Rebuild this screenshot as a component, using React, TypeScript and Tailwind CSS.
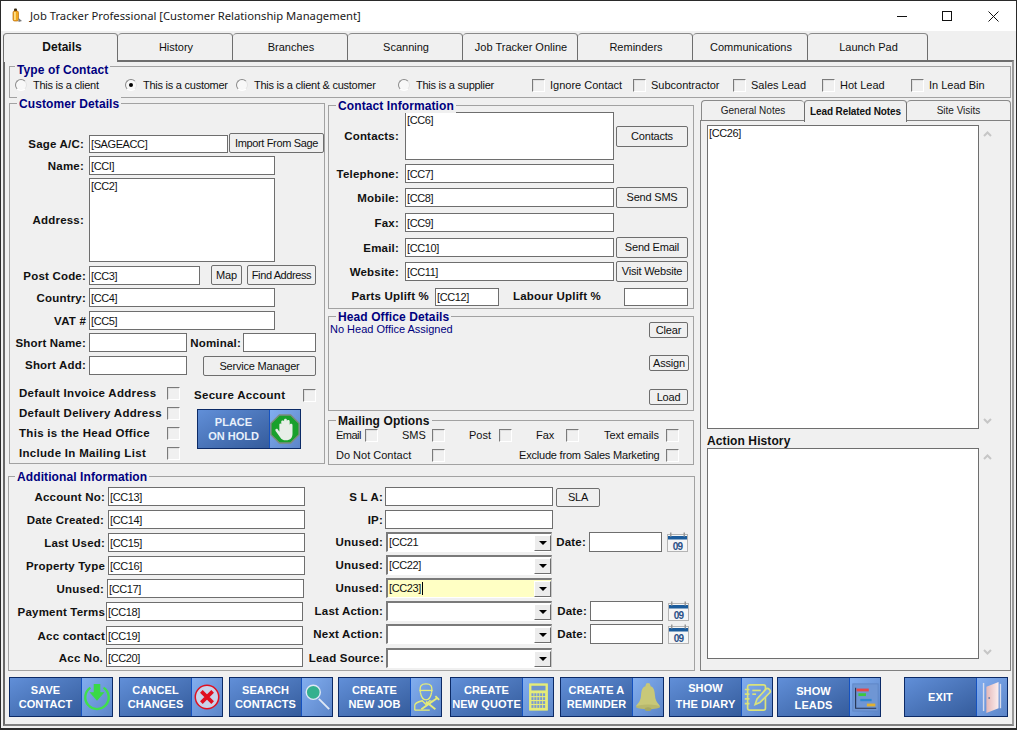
import type { ReactNode } from "react";

const sunken = "border border-[#6e6e6e] bg-white";
const inputText = "text-[11px] leading-[13px] tracking-[-0.4px] text-[#111] outline-none px-[1px]";

function Field({ w, h = "h-[19px]", value = "", bg = "bg-white" }: { w: string; h?: string; value?: string; bg?: string }) {
  return <input readOnly value={value} className={`${w} ${h} ${bg} shrink-0 border border-[#6e6e6e] ${inputText}`} />;
}

function Area({ w, h, value = "" }: { w: string; h: string; value?: string }) {
  return <textarea readOnly value={value} className={`${w} ${h} shrink-0 resize-none ${sunken} ${inputText} pt-[1px]`} />;
}

function Label({ w, pr = "pr-[4px]", children }: { w: string; pr?: string; children: ReactNode }) {
  return <span className={`${w} ${pr} flex shrink-0 justify-end text-[11.5px] leading-[14px] font-bold tracking-[0.2px] whitespace-nowrap text-[#111]`}>{children}</span>;
}

function Btn({ w, h = "h-[21px]", className = "", children }: { w: string; h?: string; className?: string; children: ReactNode }) {
  return (
    <button className={`${w} ${h} ${className} flex shrink-0 items-center justify-center rounded-[2px] border border-[#6e6e6e] bg-[#f0f0f0] text-[11px] leading-none tracking-[-0.2px] whitespace-nowrap text-[#111]`}>
      {children}
    </button>
  );
}

function Check({ className = "" }: { className?: string }) {
  return <span className={`block h-[13px] w-[13px] shrink-0 border border-t-[#7a7a7a] border-r-white border-b-white border-l-[#7a7a7a] bg-[#f0f0f0] shadow-[inset_1px_1px_0_#e0e0e0] ${className}`} />;
}

function Radio({ on = false }: { on?: boolean }) {
  return (
    <span className="flex h-[12px] w-[12px] shrink-0 items-center justify-center rounded-full border border-t-[#8a8a8a] border-r-[#e4e4e4] border-b-white border-l-[#8a8a8a] bg-[#f8f8f8]">
      {on && <span className="h-[4px] w-[4px] rounded-full bg-black" />}
    </span>
  );
}

function Group({ title, titleLeft, titleTop = "-top-[7px]", black = false, className, children }: { title: string; titleLeft: string; titleTop?: string; black?: boolean; className: string; children: ReactNode }) {
  return (
    <div className={`relative shrink-0 border border-[#a2a2a2] ${className}`}>
      <span className={`absolute ${titleLeft} ${titleTop} bg-[#f0f0f0] px-[2px] text-[12px] leading-[14px] font-bold tracking-[0.1px] whitespace-nowrap ${black ? "text-[#111]" : "text-[#00007f]"}`}>
        {title}
      </span>
      {children}
    </div>
  );
}

function Combo({ value = "", yellow = false, caret = false }: { value?: string; yellow?: boolean; caret?: boolean }) {
  return (
    <div className={`relative flex h-[20px] w-[166px] shrink-0 items-center border-t-2 border-r border-b border-l-2 border-t-[#7a7a7a] border-r-[#c8c8c8] border-b-white border-l-[#7a7a7a] ${yellow ? "bg-[#ffffc4]" : "bg-white"}`}>
      <span className={`flex-1 pl-[1px] ${inputText}`}>
        {value}
        {caret && <span className="ml-[1px] inline-block h-[13px] w-[1px] bg-black align-top" />}
      </span>
      <span className="flex h-[16px] w-[17px] shrink-0 items-center justify-center border border-t-white border-r-[#6e6e6e] border-b-[#6e6e6e] border-l-white bg-[#ececec]">
        <span className="h-0 w-0 border-x-[4px] border-t-[4px] border-x-transparent border-t-black" />
      </span>
    </div>
  );
}

function CalendarIcon() {
  return (
    <svg viewBox="0 0 21 20" className="h-[20px] w-[21px] shrink-0">
      <rect x="0.5" y="2.5" width="20" height="17" fill="#f6f6f6" stroke="#b4b4b4" />
      <rect x="1" y="4" width="19" height="3.5" fill="#1c5c9c" />
      <rect x="3" y="0.5" width="1.5" height="4" fill="#999" />
      <rect x="16.5" y="0.5" width="1.5" height="4" fill="#999" />
      <text x="10.5" y="18" textAnchor="middle" fontSize="10" fontWeight="700" letterSpacing="-0.8" fill="#2a4f86" fontFamily="Liberation Sans, sans-serif">09</text>
    </svg>
  );
}

function ChevUp() {
  return (
    <svg viewBox="0 0 9 6" className="h-[6px] w-[9px]">
      <path d="M1 5 L4.5 1.5 L8 5" fill="none" stroke="#c6c6c6" strokeWidth="2" />
    </svg>
  );
}

function ChevDown() {
  return (
    <svg viewBox="0 0 9 6" className="h-[6px] w-[9px]">
      <path d="M1 1 L4.5 4.5 L8 1" fill="none" stroke="#c6c6c6" strokeWidth="2" />
    </svg>
  );
}

/* button icons, all on a 32x38 box */
function SaveIcon() {
  return (
    <svg viewBox="0 0 32 38" className="h-full w-full">
      <path d="M9 9 A12.5 12.5 0 1 0 23 9" fill="none" stroke="#3fe04c" strokeWidth="2.5" />
      <path d="M12.5 5 H19.5 V14 H24 L16 23 L8 14 H12.5 Z" fill="#39d946" />
    </svg>
  );
}

function CancelIcon() {
  return (
    <svg viewBox="0 0 32 38" className="h-full w-full">
      <circle cx="16" cy="19" r="12.5" fill="#c9d4ea" stroke="#e01020" strokeWidth="1.6" />
      <path d="M10 13 L22 25 M22 13 L10 25" stroke="#e01020" strokeWidth="4" />
    </svg>
  );
}

function SearchIcon() {
  return (
    <svg viewBox="0 0 32 38" className="h-full w-full">
      <path d="M18 21 L29 32" stroke="#dfe8f5" strokeWidth="2" />
      <circle cx="12" cy="14" r="7.5" fill="#34b08e" stroke="#dfe8f5" strokeWidth="1.5" />
    </svg>
  );
}

function JobIcon() {
  return (
    <svg viewBox="0 0 32 38" fill="none" stroke="#e6ec78" strokeWidth="1.4" className="h-full w-full">
      <path d="M10 14 C9 7 11 5 16 5 C21 5 23 7 22 14" />
      <path d="M9 12 H23" />
      <path d="M10 14 C11 20 13 22 16 22 C19 22 21 20 22 14" />
      <path d="M4 33 V28 C4 25 8 24 12 23 L16 27 L20 23 L23 24" />
      <path d="M4 33 H20" />
      <path d="M11 32 L28 20 M26 18 L30 22" strokeWidth="2" />
      <path d="M16 24 L26 32" strokeWidth="2" />
    </svg>
  );
}

function CalcIcon() {
  const keys = [0, 1, 2, 3].flatMap((r) => [0, 1, 2, 3, 4].map((c) => ({ r, c })));
  return (
    <svg viewBox="0 0 32 38" className="h-full w-full">
      <rect x="7" y="5" width="19" height="28" fill="#e6ec78" stroke="#e6ec78" />
      <rect x="9" y="7" width="15" height="5" fill="#7094cc" />
      {keys.map(({ r, c }) => (
        <rect key={`${r}-${c}`} x={9 + c * 3.1} y={15 + r * 4.2} width="2.2" height="3" fill="#7a9ad0" />
      ))}
    </svg>
  );
}

function BellIcon() {
  return (
    <svg viewBox="0 0 32 38" className="h-full w-full">
      <circle cx="16" cy="6.5" r="2.5" fill="#c8c878" />
      <path d="M16 7 C9 7 9 13 8.5 18 C8 24 5 26 3 29 H29 C27 26 24 24 23.5 18 C23 13 23 7 16 7 Z" fill="#c8c878" />
      <ellipse cx="16" cy="29.5" rx="13" ry="2.5" fill="#b8b86c" />
      <ellipse cx="16" cy="32" rx="3.5" ry="2" fill="#a5a862" />
    </svg>
  );
}

function DiaryIcon() {
  return (
    <svg viewBox="0 0 32 38" fill="none" stroke="#dbe27a" strokeWidth="1.8" className="h-full w-full">
      <rect x="6" y="6" width="19" height="27" rx="2" />
      <path d="M3 11 H8 M3 16 H8 M3 21 H8 M3 26 H8" />
      <path d="M11 12 H20" />
      <path d="M11 16 H15" />
      <path d="M14 27 L16 21 L26 10 C28 9 31 12 30 14 L19 25 Z" fill="#7ea7e6" />
    </svg>
  );
}

function LeadsIcon() {
  return (
    <svg viewBox="0 0 32 38" className="h-full w-full">
      <rect x="3" y="5" width="27" height="29" fill="#6f96d4" stroke="#5f86c6" />
      <path d="M6 9 V31 H28" fill="none" stroke="#26324f" strokeWidth="1.2" />
      <rect x="7" y="10" width="13" height="3" fill="#e84848" />
      <rect x="9" y="15" width="8" height="3" fill="#3cc83c" />
      <rect x="11" y="21" width="12" height="2.5" fill="#2f86d0" />
      <rect x="18" y="26" width="9" height="3" fill="#e0b030" />
    </svg>
  );
}

function DoorIcon() {
  return (
    <svg viewBox="0 0 32 38" className="h-full w-full">
      <defs>
        <linearGradient id="door" x1="0" x2="1" y1="0" y2="0">
          <stop offset="0" stopColor="#e4b8b8" />
          <stop offset="1" stopColor="#fbeeee" />
        </linearGradient>
      </defs>
      <path d="M7 4 V34" stroke="#d8dcec" strokeWidth="1.5" />
      <path d="M25 5 V31" stroke="#d8dcec" strokeWidth="1.5" />
      <path d="M10 8 L23 3 V31 L10 36 Z" fill="url(#door)" />
      <circle cx="13" cy="20" r="1" fill="#6f7fa8" />
    </svg>
  );
}

function HoldIcon() {
  return (
    <svg viewBox="0 0 32 38" className="h-full w-full">
      <path d="M10 4 H22 L31 13 V25 L22 34 H10 L1 25 V13 Z" fill="#19a02c" stroke="#7c8c80" strokeWidth="1.5" />
      <path d="M10 14 V22 L8 19 C7 18 5 19 6 21 L11 28 C12 30 14 31 17 31 C22 31 24 28 24 24 V15 C24 13 21 13 21 15 V11 C21 9 18 9 18 11 V9.5 C18 7.5 15 7.5 15 9.5 V11 C15 9.5 12 9.5 12 11 V14 C12 13 10 13 10 14 Z" fill="#e8efe8" />
    </svg>
  );
}

function ActionButton({ lines, icon, ml, text = "leading-[14px]" }: { lines: string[]; icon: ReactNode; ml: string; text?: string }) {
  return (
    <button className={`${ml} flex h-[40px] w-[104px] shrink-0 border border-[#0c2a66]`}>
      <span className={`flex h-full w-[71px] shrink-0 flex-col items-center justify-center bg-linear-to-br from-[#618fd8] to-[#355c9c] text-[11px] font-bold tracking-[0.1px] text-white ${text}`}>
        {lines.map((l) => (
          <span key={l} className="whitespace-nowrap">{l}</span>
        ))}
      </span>
      <span className="h-full w-[31px] shrink-0 border-l border-[#1552c0] bg-linear-to-br from-[#82aef0] to-[#5c85c8]">{icon}</span>
    </button>
  );
}

function TypeRadio({ w, label, on }: { w: string; label: string; on?: boolean }) {
  return (
    <span className={`${w} flex shrink-0 items-center gap-[6px] text-[11px] leading-none tracking-[-0.25px] whitespace-nowrap text-[#111]`}>
      <Radio on={on} />
      {label}
    </span>
  );
}

function TypeCheck({ w, label }: { w: string; label: string }) {
  return (
    <span className={`${w} flex shrink-0 items-center gap-[5px] text-[11px] leading-none whitespace-nowrap text-[#111]`}>
      <Check />
      {label}
    </span>
  );
}

function MailOption({ w, ml = "", label }: { w: string; ml?: string; label: string }) {
  return (
    <span className={`${ml} flex shrink-0 items-center text-[11px] leading-none whitespace-nowrap text-[#111]`}>
      <span className={w}>{label}</span>
      <Check />
    </span>
  );
}

function CheckLine({ label }: { label: string }) {
  return (
    <div className="flex h-[20px] items-center">
      <span className="w-[148px] text-[11.5px] leading-[14px] font-bold tracking-[0.3px] whitespace-nowrap text-[#111]">{label}</span>
      <Check />
    </div>
  );
}

const tabs = [
  { label: "History", w: "w-[115px]" },
  { label: "Branches", w: "w-[115px]" },
  { label: "Scanning", w: "w-[115px]" },
  { label: "Job Tracker Online", w: "w-[115px]" },
  { label: "Reminders", w: "w-[115px]" },
  { label: "Communications", w: "w-[115px]" },
  { label: "Launch Pad", w: "w-[120px]" },
];

const leftRows = [
  { label: "Account No:", value: "[CC13]", lw: "w-[99px]", pr: "pr-[3px]", mt: "mt-[10px]" },
  { label: "Date Created:", value: "[CC14]", lw: "w-[99px]", pr: "pr-[4px]", mt: "mt-[4px]" },
  { label: "Last Used:", value: "[CC15]", lw: "w-[99px]", pr: "pr-[3px]", mt: "mt-[4px]" },
  { label: "Property Type", value: "[CC16]", lw: "w-[99px]", pr: "pr-[3px]", mt: "mt-[4px]" },
  { label: "Unused:", value: "[CC17]", lw: "w-[98px]", pr: "pr-[3px]", mt: "mt-[4px]" },
  { label: "Payment Terms", value: "[CC18]", lw: "w-[97px]", pr: "pr-[1px]", mt: "mt-[4px]" },
  { label: "Acc contact", value: "[CC19]", lw: "w-[97px]", pr: "pr-[1px]", mt: "mt-[5px]" },
  { label: "Acc No.", value: "[CC20]", lw: "w-[97px]", pr: "pr-[3px]", mt: "mt-[3px]" },
];

export default function App() {
  return (
    <div className="flex h-[730px] w-[1017px] flex-col overflow-hidden border border-b-2 border-[#2a2a2a] bg-[#f0f0f0] font-['Liberation_Sans',sans-serif]">
      {/* Title bar */}
      <div className="flex h-[30px] shrink-0 items-center bg-white">
        <svg viewBox="0 0 12 16" className="ml-[10px] h-[16px] w-[12px]">
          <rect x="3" y="0.5" width="3" height="3" rx="1" fill="#3a2a10" />
          <rect x="2" y="3" width="5.5" height="10" rx="1.5" fill="#f2a81c" stroke="#b86c10" strokeWidth="0.7" />
          <rect x="3.2" y="4" width="1.5" height="8" fill="#ffe9a0" />
          <path d="M7.5 10 L11 13 L7.5 14 Z" fill="#7a7a7a" />
        </svg>
        <span className="ml-[7px] font-['Noto_Sans',sans-serif] text-[11.25px] text-[#1a1a1a]">Job Tracker Professional [Customer Relationship Management]</span>
        <div className="ml-auto flex items-center pr-[17px]">
          <svg viewBox="0 0 10 10" className="h-[10px] w-[10px]"><path d="M0 5.5 H10" stroke="#111" /></svg>
          <svg viewBox="0 0 10 10" className="ml-[35px] h-[10px] w-[10px]"><rect x="0.5" y="0.5" width="9" height="9" fill="none" stroke="#111" /></svg>
          <svg viewBox="0 0 11 11" className="ml-[36px] h-[11px] w-[11px]"><path d="M0.5 0.5 L10.5 10.5 M10.5 0.5 L0.5 10.5" stroke="#111" /></svg>
        </div>
      </div>

      {/* Tab strip */}
      <div className="mt-[2px] flex h-[27px] shrink-0 pl-[2px]">
        <div className="relative z-10 flex h-[29px] w-[115px] shrink-0 items-center justify-center rounded-t-[4px] border-x border-t border-x-[#6e6e6e] border-t-[#8a8a8a] bg-[#f0f0f0] pb-[3px] pl-[3px] text-[12px] font-bold text-[#111]">
          Details
        </div>
        {tabs.map((t) => (
          <div key={t.label} className={`${t.w} flex h-[27px] shrink-0 items-center justify-center rounded-t-[4px] border-t border-r border-t-[#8a8a8a] border-r-[#6e6e6e] bg-[#f0f0f0] pl-[2px] text-[11px] text-[#111]`}>
            {t.label}
          </div>
        ))}
      </div>

      {/* Page frame */}
      <div className="ml-[2px] flex h-[666px] w-[1011px] shrink-0 flex-col border-2 border-t-[#6e6e6e] border-r-[#9a9a9a] border-b-[#808080] border-l-[#696969] pl-[3px]">
        <Group title="Type of Contact" titleLeft="left-[5px]" titleTop="-top-[4px]" className="mt-[4px] ml-[1px] h-[32px] w-[1002px]">
          <div className="mt-[11px] flex h-[14px] items-center pl-[5px]">
            <TypeRadio w="w-[110px]" label="This is a client" />
            <TypeRadio w="w-[111px]" label="This is a customer" on />
            <TypeRadio w="w-[162px]" label="This is a client & customer" />
            <TypeRadio w="w-[134px]" label="This is a supplier" />
            <TypeCheck w="w-[101px]" label="Ignore Contact" />
            <TypeCheck w="w-[100px]" label="Subcontractor" />
            <TypeCheck w="w-[89px]" label="Sales Lead" />
            <TypeCheck w="w-[89px]" label="Hot Lead" />
            <TypeCheck w="w-[90px]" label="In Lead Bin" />
          </div>
        </Group>

        <div className="mt-[2px] flex h-[571px] shrink-0">
          {/* Left side */}
          <div className="w-[687px] shrink-0 pt-[3px]">
            <div className="flex h-[373px]">
              <Group title="Customer Details" titleLeft="left-[7px]" className="ml-[1px] h-[361px] w-[316px]">
                <div className="mt-[29px] flex h-[20px] items-end">
                  <Label w="w-[79px]" pr="pr-[5px]"><span className="relative -top-[2px]">Sage A/C:</span></Label>
                  <Field w="w-[139px]" h="h-[18px]" value="[SAGEACC]" />
                  <Btn w="w-[95px]" h="h-[20px]" className="ml-[1px] tracking-[-0.35px]">Import From Sage</Btn>
                </div>
                <div className="mt-[3px] flex h-[19px] items-center">
                  <Label w="w-[79px]" pr="pr-[5px]">Name:</Label>
                  <Field w="w-[186px]" value="[CCI]" />
                </div>
                <div className="mt-[3px] flex h-[84px] items-center">
                  <Label w="w-[79px]" pr="pr-[5px]">Address:</Label>
                  <Area w="w-[186px]" h="h-[84px]" value="[CC2]" />
                </div>
                <div className="mt-[3px] flex h-[20px] items-end">
                  <Label w="w-[79px]" pr="pr-[3px]"><span className="relative -top-[2px]">Post Code:</span></Label>
                  <Field w="w-[111px]" value="[CC3]" />
                  <Btn w="w-[31px]" h="h-[20px]" className="ml-[11px]">Map</Btn>
                  <Btn w="w-[69px]" h="h-[20px]" className="ml-[5px] tracking-[-0.4px]">Find Address</Btn>
                </div>
                <div className="mt-[3px] flex h-[19px] items-center">
                  <Label w="w-[79px]" pr="pr-[3px]">Country:</Label>
                  <Field w="w-[186px]" value="[CC4]" />
                </div>
                <div className="mt-[4px] flex h-[19px] items-center">
                  <Label w="w-[79px]" pr="pr-[3px]">VAT #</Label>
                  <Field w="w-[186px]" value="[CC5]" />
                </div>
                <div className="mt-[3px] flex h-[19px] items-center">
                  <Label w="w-[79px]" pr="pr-[3px]">Short Name:</Label>
                  <Field w="w-[98px]" />
                  <Label w="w-[56px]" pr="pr-[2px]">Nominal:</Label>
                  <Field w="w-[73px]" />
                </div>
                <div className="mt-[4px] flex h-[20px] items-start">
                  <Label w="w-[79px]" pr="pr-[3px]"><span className="relative top-[2px]">Short Add:</span></Label>
                  <Field w="w-[98px]" />
                  <Btn w="w-[113px]" h="h-[20px]" className="ml-[16px]">Service Manager</Btn>
                </div>
                <div className="mt-[7px] flex">
                  <div className="ml-[9px] w-[175px] shrink-0">
                    <CheckLine label="Default Invoice Address" />
                    <CheckLine label="Default Delivery Address" />
                    <CheckLine label="This is the Head Office" />
                    <CheckLine label="Include In Mailing List" />
                  </div>
                  <div className="mt-[2px] w-[122px] shrink-0">
                    <div className="flex h-[20px] items-center justify-between">
                      <span className="text-[11.5px] leading-[14px] font-bold tracking-[0.3px] whitespace-nowrap text-[#111]">Secure Account</span>
                      <Check />
                    </div>
                    <button className="mt-[4px] ml-[3px] flex h-[40px] w-[104px] border border-[#0c2a66]">
                      <span className="flex h-full w-[71px] shrink-0 flex-col items-center justify-center bg-linear-to-br from-[#618fd8] to-[#355c9c] text-[11px] leading-[14px] font-bold text-[#e8f0fb]">
                        <span>PLACE</span>
                        <span>ON HOLD</span>
                      </span>
                      <span className="h-full w-[31px] shrink-0 border-l border-[#1552c0] bg-linear-to-br from-[#82aef0] to-[#5c85c8]"><HoldIcon /></span>
                    </button>
                  </div>
                </div>
              </Group>

              <div className="ml-[3px] w-[366px] shrink-0">
                <Group title="Contact Information" titleLeft="left-[7px]" className="mt-[2px] h-[204px] w-[366px]">
                  <div className="mt-[6px] flex h-[48px] items-center">
                    <Label w="w-[76px]" pr="pr-[6px]">Contacts:</Label>
                    <Area w="w-[209px]" h="h-[48px]" value="[CC6]" />
                    <Btn w="w-[72px]" className="ml-[2px]">Contacts</Btn>
                  </div>
                  <div className="mt-[4px] flex h-[19px] items-center">
                    <Label w="w-[76px]" pr="pr-[6px]">Telephone:</Label>
                    <Field w="w-[209px]" value="[CC7]" />
                  </div>
                  <div className="mt-[4px] flex h-[21px] items-center">
                    <Label w="w-[76px]" pr="pr-[6px]">Mobile:</Label>
                    <Field w="w-[209px]" value="[CC8]" />
                    <Btn w="w-[72px]" className="ml-[2px]">Send SMS</Btn>
                  </div>
                  <div className="mt-[5px] flex h-[19px] items-center">
                    <Label w="w-[76px]" pr="pr-[6px]">Fax:</Label>
                    <Field w="w-[209px]" value="[CC9]" />
                  </div>
                  <div className="mt-[5px] flex h-[21px] items-center">
                    <Label w="w-[76px]" pr="pr-[6px]">Email:</Label>
                    <Field w="w-[209px]" value="[CC10]" />
                    <Btn w="w-[72px]" className="ml-[2px]">Send Email</Btn>
                  </div>
                  <div className="mt-[3px] flex h-[21px] items-center">
                    <Label w="w-[76px]" pr="pr-[6px]">Website:</Label>
                    <Field w="w-[209px]" value="[CC11]" />
                    <Btn w="w-[72px]" className="ml-[2px]">Visit Website</Btn>
                  </div>
                  <div className="mt-[5px] flex h-[18px] items-center">
                    <Label w="w-[100px]" pr="pr-0">Parts Uplift %</Label>
                    <span className="ml-[6px]"><Field w="w-[64px]" h="h-[18px]" value="[CC12]" /></span>
                    <Label w="w-[102px]" pr="pr-0">Labour Uplift %</Label>
                    <span className="ml-[23px]"><Field w="w-[64px]" h="h-[18px]" /></span>
                  </div>
                </Group>

                <Group title="Head Office Details" titleLeft="left-[7px]" className="mt-[7px] h-[95px] w-[366px]">
                  <div className="flex justify-between pr-[4px]">
                    <span className="mt-[6px] pl-[1px] text-[11px] leading-[13px] text-[#00007f]">No Head Office Assigned</span>
                    <div className="mt-[5px] flex w-[40px] flex-col">
                      <Btn w="w-[39px]" h="h-[16px]">Clear</Btn>
                      <Btn w="w-[40px]" h="h-[16px]" className="mt-[17px]">Assign</Btn>
                      <Btn w="w-[39px]" h="h-[16px]" className="mt-[18px]">Load</Btn>
                    </div>
                  </div>
                </Group>

                <Group title="Mailing Options" titleLeft="left-[7px]" black className="mt-[9px] h-[45px] w-[366px]">
                  <div className="mt-[7px] flex h-[14px] items-center pl-[7px]">
                    <MailOption w="w-[29px] tracking-[-0.5px]" label="Email" />
                    <MailOption w="w-[30px]" ml="ml-[24px]" label="SMS" />
                    <MailOption w="w-[30px]" ml="ml-[24px]" label="Post" />
                    <MailOption w="w-[30px]" ml="ml-[24px]" label="Fax" />
                    <MailOption w="w-[62px]" ml="ml-[25px]" label="Text emails" />
                  </div>
                  <div className="mt-[6px] flex h-[14px] items-center pl-[7px]">
                    <MailOption w="w-[96px]" label="Do Not Contact" />
                    <MailOption w="w-[147px] tracking-[-0.2px]" ml="ml-[74px]" label="Exclude from Sales Marketing" />
                  </div>
                </Group>
              </div>
            </div>

            <Group title="Additional Information" titleLeft="left-[6px]" className="h-[195px] w-[687px]">
              <div className="flex">
                <div className="w-[296px] shrink-0">
                  {leftRows.map((r) => (
                    <div key={r.value} className={`${r.mt} flex h-[19px] items-center`}>
                      <Label w={r.lw} pr={r.pr}>{r.label}</Label>
                      <Field w="w-[197px]" value={r.value} />
                    </div>
                  ))}
                </div>
                <div className="ml-[25px] flex-1 pt-[10px]">
                  <div className="flex h-[19px] items-center">
                    <Label w="w-[55px]" pr="pr-[2px]">S L A:</Label>
                    <Field w="w-[168px]" />
                    <Btn w="w-[44px]" h="h-[19px]" className="relative top-[1px] ml-[3px]">SLA</Btn>
                  </div>
                  <div className="mt-[4px] flex h-[19px] items-center">
                    <Label w="w-[55px]" pr="pr-[2px]">IP:</Label>
                    <Field w="w-[168px]" />
                  </div>
                  <div className="mt-[3px] flex h-[20px] items-center">
                    <Label w="w-[56px]" pr="pr-[3px]">Unused:</Label>
                    <Combo value="[CC21" />
                    <Label w="w-[37px]" pr="pr-[3px]">Date:</Label>
                    <Field w="w-[73px]" h="h-[20px]" />
                    <span className="ml-[5px]"><CalendarIcon /></span>
                  </div>
                  <div className="mt-[3px] flex h-[20px] items-center">
                    <Label w="w-[56px]" pr="pr-[3px]">Unused:</Label>
                    <Combo value="[CC22]" />
                  </div>
                  <div className="mt-[3px] flex h-[20px] items-center">
                    <Label w="w-[56px]" pr="pr-[3px]">Unused:</Label>
                    <Combo value="[CC23]" yellow caret />
                  </div>
                  <div className="mt-[3px] flex h-[20px] items-center">
                    <Label w="w-[56px]" pr="pr-[3px]">Last Action:</Label>
                    <Combo />
                    <Label w="w-[38px]" pr="pr-[3px]">Date:</Label>
                    <Field w="w-[73px]" h="h-[20px]" />
                    <span className="ml-[5px]"><CalendarIcon /></span>
                  </div>
                  <div className="mt-[3px] flex h-[20px] items-center">
                    <Label w="w-[56px]" pr="pr-[3px]">Next Action:</Label>
                    <Combo />
                    <Label w="w-[38px]" pr="pr-[3px]">Date:</Label>
                    <Field w="w-[73px]" h="h-[20px]" />
                    <span className="ml-[5px]"><CalendarIcon /></span>
                  </div>
                  <div className="mt-[4px] flex h-[20px] items-center">
                    <Label w="w-[56px]" pr="pr-[2px]">Lead Source:</Label>
                    <Combo />
                  </div>
                </div>
              </div>
            </Group>
          </div>

          {/* Notes side */}
          <div className="ml-[5px] w-[312px] shrink-0">
            <div className="flex h-[20px]">
              <div className="ml-[1px] flex w-[103px] items-center justify-center rounded-t-[4px] border-t border-l border-t-[#8a8a8a] border-l-[#8a8a8a] text-[10px] text-[#222]">General Notes</div>
              <div className="relative z-10 flex h-[22px] w-[103px] items-center justify-center rounded-t-[4px] border-x border-t border-x-[#6e6e6e] border-t-[#8a8a8a] bg-[#f0f0f0] pb-[1px] text-[10px] font-bold tracking-[-0.1px] text-[#111]">Lead Related Notes</div>
              <div className="flex w-[104px] items-center justify-center rounded-t-[4px] border-t border-r border-t-[#8a8a8a] border-r-[#8a8a8a] text-[10px] text-[#222]">Site Visits</div>
            </div>
            <div className="h-[551px] w-[311px] border border-[#808080] pl-[6px]">
              <div className="mt-[4px] flex h-[304px]">
                <Area w="w-[272px]" h="h-[304px]" value="[CC26]" />
                <div className="ml-[4px] flex flex-col justify-between pt-[6px] pb-[5px]">
                  <ChevUp />
                  <ChevDown />
                </div>
              </div>
              <div className="h-[19px] pt-[5px] text-[12px] leading-[14px] font-bold tracking-[0.1px] text-[#111]">Action History</div>
              <div className="flex h-[211px]">
                <Area w="w-[272px]" h="h-[211px]" />
                <div className="ml-[4px] flex flex-col justify-between pt-[6px] pb-[4px]">
                  <ChevUp />
                  <ChevDown />
                </div>
              </div>
            </div>
          </div>
        </div>

        {/* Action buttons */}
        <div className="mt-[6px] flex">
          <ActionButton ml="ml-[1px]" lines={["SAVE", "CONTACT"]} icon={<SaveIcon />} />
          <ActionButton ml="ml-[6px]" lines={["CANCEL", "CHANGES"]} icon={<CancelIcon />} />
          <ActionButton ml="ml-[6px]" lines={["SEARCH", "CONTACTS"]} icon={<SearchIcon />} />
          <ActionButton ml="ml-[5px]" lines={["CREATE", "NEW JOB"]} icon={<JobIcon />} />
          <ActionButton ml="ml-[8px]" lines={["CREATE", "NEW QUOTE"]} icon={<CalcIcon />} />
          <ActionButton ml="ml-[6px]" lines={["CREATE A", "REMINDER"]} icon={<BellIcon />} />
          <ActionButton ml="ml-[5px]" lines={["SHOW", "THE DIARY"]} icon={<DiaryIcon />} text="gap-[2px] pb-[3px] leading-[14px]" />
          <ActionButton ml="ml-[4px]" lines={["SHOW", "LEADS"]} icon={<LeadsIcon />} text="pt-[2px] leading-[14px]" />
          <ActionButton ml="ml-[23px]" lines={["EXIT"]} icon={<DoorIcon />} />
        </div>
      </div>
    </div>
  );
}
